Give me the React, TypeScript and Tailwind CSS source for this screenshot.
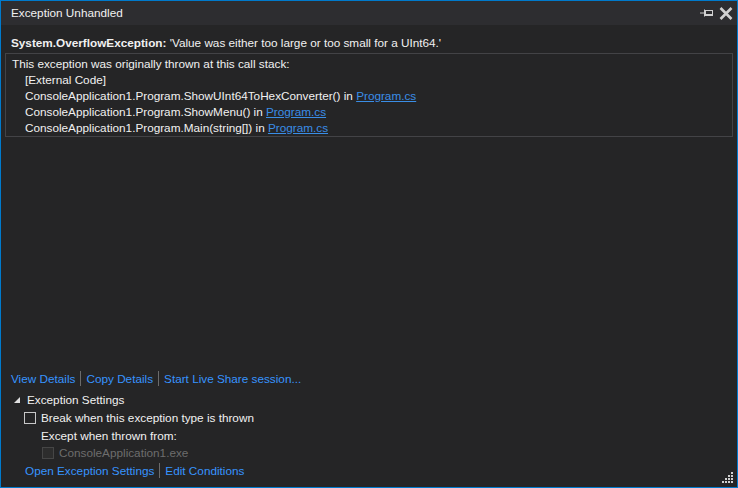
import React from "react";

const font = { fontFamily: '"Segoe UI", "Liberation Sans", Arial, sans-serif' };

function Link({ children }: { children: React.ReactNode }) {
  return <span className="text-[#3794ff] cursor-pointer">{children}</span>;
}

function Sep() {
  return <span className="mx-[5px] inline-block h-[15px] w-px bg-[#6b6b6b] align-[-3px]" />;
}

function Grip() {
  const dots: [number, number][] = [];
  for (let r = 0; r < 4; r++) {
    for (let c = 3 - r; c < 4; c++) dots.push([c * 3, r * 3]);
  }
  return (
    <svg width="12" height="12" className="absolute right-[3px] bottom-[3px]">
      {dots.map(([x, y], i) => (
        <rect key={i} x={x} y={y} width="2" height="2" fill="#d0d0d0" />
      ))}
    </svg>
  );
}

export default function App() {
  return (
    <div
      style={font}
      className="relative flex h-[488px] w-[738px] flex-col border border-[#007acc] bg-[#252526] text-[11.75px] leading-[16px] text-[#f1f1f1]"
    >
      {/* title bar */}
      <div className="flex h-[24px] items-center justify-between bg-[#2d2d30] pl-[10px] pr-[4px]">
        <span className="text-[#f1f1f1]">Exception Unhandled</span>
        <div className="flex items-center gap-[6px]">
          <svg width="13" height="10" viewBox="0 0 13 10">
            <path d="M0 5h4" stroke="#d0d0d0" strokeWidth="1" />
            <path d="M4.5 1.5v7" stroke="#d0d0d0" strokeWidth="1" />
            <rect x="5.5" y="2.5" width="7" height="5" fill="none" stroke="#d0d0d0" strokeWidth="1" />
            <path d="M6 6.5h6" stroke="#d0d0d0" strokeWidth="1" />
          </svg>
          <svg width="14" height="13" viewBox="0 0 14 13">
            <path d="M1.5 1l11 11M12.5 1l-11 11" stroke="#d0d0d0" strokeWidth="2.6" />
          </svg>
        </div>
      </div>

      {/* exception message */}
      <div className="px-[10px] pt-[10px] pb-[2px]">
        <span className="font-bold">System.OverflowException:</span>{" "}
        <span>'Value was either too large or too small for a UInt64.'</span>
      </div>

      <div className="mx-[4px] border border-[#434346] px-[6px] pt-[2px]">
        <div>This exception was originally thrown at this call stack:</div>
        <div className="pl-[13px]">
          <div>[External Code]</div>
          <div>
            ConsoleApplication1.Program.ShowUInt64ToHexConverter() in{" "}
            <span className="text-[#3a8ee6] underline">Program.cs</span>
          </div>
          <div>
            ConsoleApplication1.Program.ShowMenu() in{" "}
            <span className="text-[#3a8ee6] underline">Program.cs</span>
          </div>
          <div>
            ConsoleApplication1.Program.Main(string[]) in{" "}
            <span className="text-[#3a8ee6] underline">Program.cs</span>
          </div>
        </div>
      </div>

      <div className="flex-1" />

      {/* bottom actions */}
      <div className="pl-[10px] pb-[7px]">
        <div className="h-[20px] leading-[20px]">
          <Link>View Details</Link>
          <Sep />
          <Link>Copy Details</Link>
          <Sep />
          <Link>Start Live Share session...</Link>
        </div>
        <div className="mt-[2px] flex h-[18px] items-center">
          <svg width="8" height="8" viewBox="0 0 8 8" className="ml-[2px] mr-[6px]">
            <path d="M7 1v6H1z" fill="#e0e0e0" />
          </svg>
          <span>Exception Settings</span>
        </div>
        <div className="flex h-[18px] items-center pl-[13px]">
          <span className="mr-[5px] inline-block h-[12px] w-[12px] border border-[#c8c8c8]" />
          <span>Break when this exception type is thrown</span>
        </div>
        <div className="flex h-[17px] items-center pl-[30px]">Except when thrown from:</div>
        <div className="flex h-[17px] items-center pl-[31px] text-[#6d6d6d]">
          <span className="mr-[5px] inline-block h-[12px] w-[12px] border border-[#464646] bg-[#2d2d2d]" />
          <span>ConsoleApplication1.exe</span>
        </div>
        <div className="h-[19px] pl-[14px] leading-[19px]">
          <Link>Open Exception Settings</Link>
          <Sep />
          <Link>Edit Conditions</Link>
        </div>
      </div>

      <Grip />
    </div>
  );
}
